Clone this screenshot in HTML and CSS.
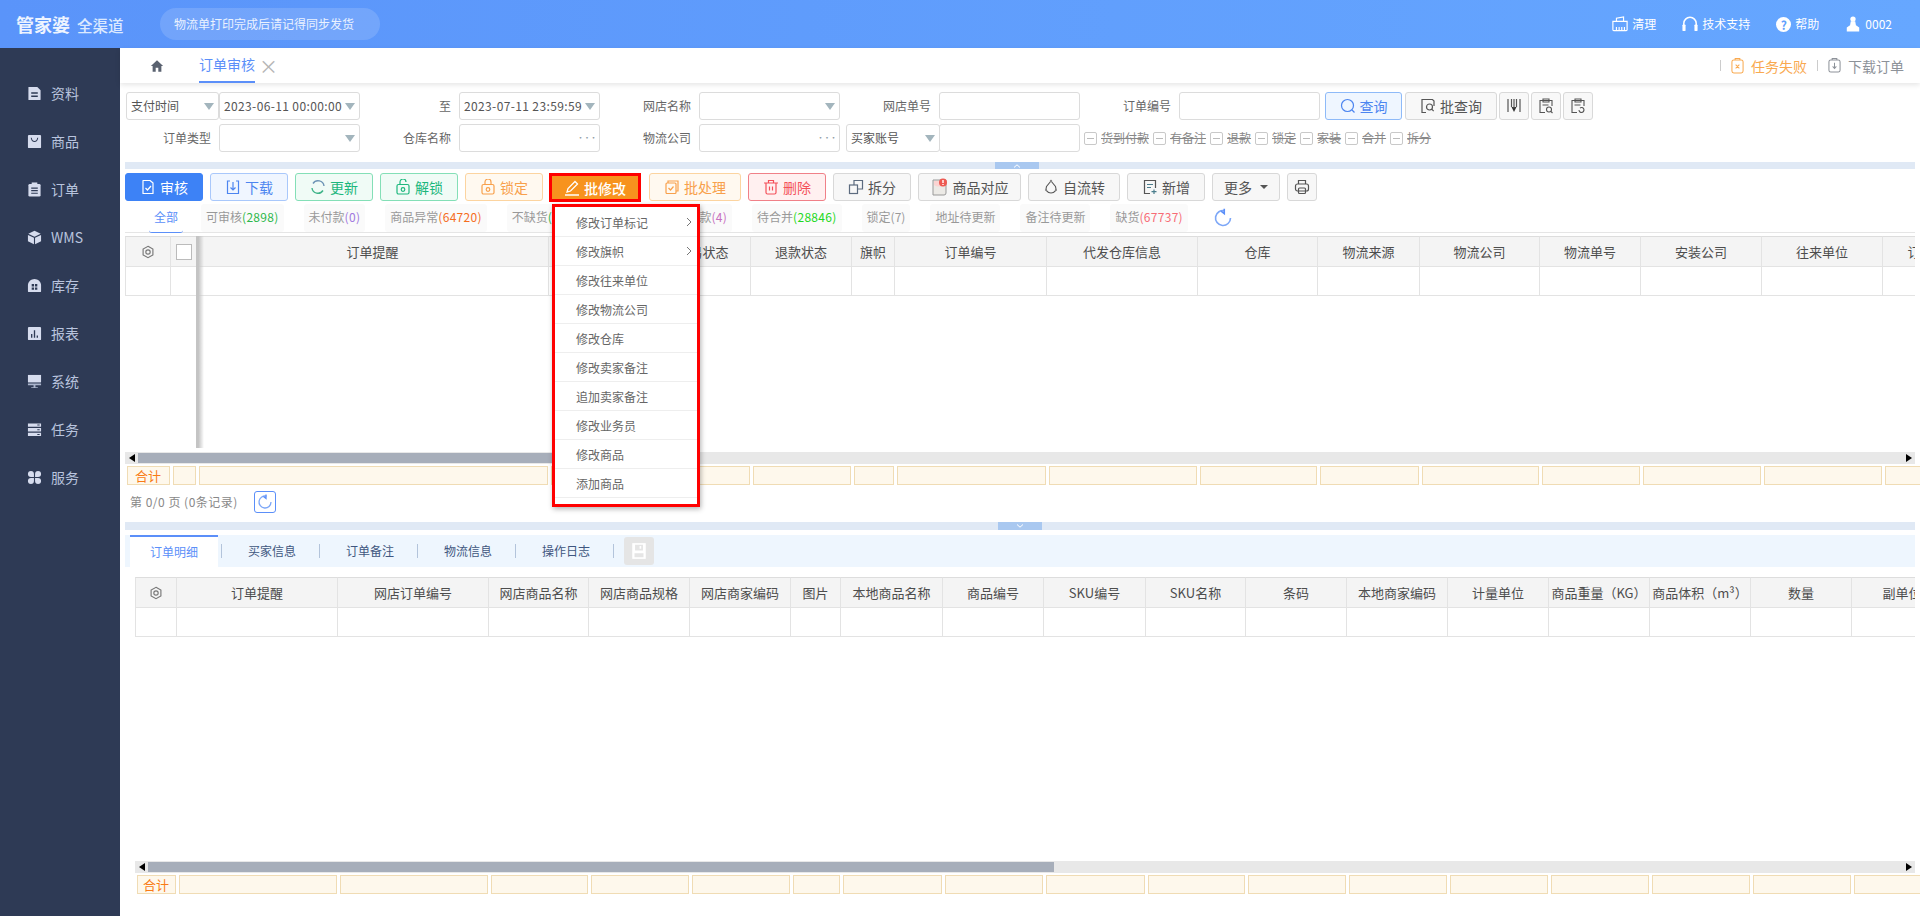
FILE: index.html
```html
<!DOCTYPE html>
<html lang="zh-CN">
<head>
    <meta charset="UTF-8">
    <meta name="viewport" content="width=device-width, initial-scale=1.0">
    <title>订单审核</title>
    <link rel="stylesheet" href="styles.css">
</head>
<body>
    <!-- icon sprite -->
    <svg class="sprite" xmlns="http://www.w3.org/2000/svg">
        <symbol id="i-doc" viewBox="0 0 16 16"><path fill="currentColor" d="M1.500 1H11l3.500 3.500V14a1 1 0 0 1-1 1h-12z"/><path stroke="#2e3a55" stroke-width="1.600" d="M4.500 7.500h7M4.500 11h7"/></symbol>
        <symbol id="i-bag" viewBox="0 0 16 16"><rect fill="currentColor" x="1" y="1" width="14" height="14" rx="1"/><path fill="none" stroke="#2e3a55" stroke-width="1.100" d="M4.500 4c.5 3 2 4 3.500 4s3-1 3.500-4"/></symbol>
        <symbol id="i-clip" viewBox="0 0 16 16"><rect fill="currentColor" x="1.500" y="2" width="13" height="13.500" rx="1.500"/><rect fill="currentColor" x="5" y="0.500" width="6" height="3"/><path stroke="#2e3a55" stroke-width="1.200" d="M4.500 6.500h7M4.500 9.200h7M4.500 12h7"/></symbol>
        <symbol id="i-cube" viewBox="0 0 16 16"><path fill="currentColor" d="M8 .8l6.600 3.200L8 7.200 1.400 4zM1 5.200l6.400 3.100v7L1 12zM15 5.200l-6.400 3.100v7L15 12z"/></symbol>
        <symbol id="i-house" viewBox="0 0 16 16"><path fill="currentColor" d="M8 1c3.600 0 7 3 7 6.500V14a1 1 0 0 1-1 1H2a1 1 0 0 1-1-1V7.500C1 4 4.400 1 8 1z"/><path fill="#2e3a55" d="M5 6.500h2.500V9H5zM8.500 6.500H11V9H8.500zM5 10h2.500v2.500H5zM8.500 10H11v2.500H8.500z"/></symbol>
        <symbol id="i-chart" viewBox="0 0 16 16"><rect fill="currentColor" x="1" y="1" width="14" height="14" rx="1"/><path stroke="#2e3a55" stroke-width="1.400" d="M5 12.500V8.500M8 12.500V4.500M11 12.500V10"/></symbol>
        <symbol id="i-screen" viewBox="0 0 16 16"><path fill="currentColor" d="M1 1h14v8H1z"/><path fill="#aab4cc" d="M1 10h14v2H1zM7 12h2v2h2.500v1h-7v-1H7z"/></symbol>
        <symbol id="i-server" viewBox="0 0 16 16"><path fill="currentColor" d="M1 1.500h14V5H1zM1 6.500h14V10H1zM1 11.500h14V15H1z"/><path fill="#2e3a55" d="M11 2.700h2.500v1.100H11zM11 7.700h2.500v1.100H11zM11 12.700h2.500v1.100H11z"/></symbol>
        <symbol id="i-clover" viewBox="0 0 16 16"><path fill="currentColor" d="M1 4.200a3.200 3.200 0 0 1 6.400 0v3.200H4.200A3.200 3.200 0 0 1 1 4.200zM15 4.200a3.200 3.200 0 0 0-6.400 0v3.200h3.200A3.200 3.200 0 0 0 15 4.200zM1 11.800a3.200 3.200 0 0 1 3.200-3.200h3.200v3.200a3.200 3.200 0 0 1-6.400 0zM15 11.800a3.200 3.200 0 0 0-3.200-3.200H8.600v3.200a3.200 3.200 0 0 0 6.400 0z"/></symbol>

        <symbol id="i-basket" viewBox="0 0 18 18"><g fill="none" stroke="currentColor" stroke-width="1.300"><path d="M1 6h16v9.500a1 1 0 0 1-1 1H2a1 1 0 0 1-1-1z"/><path d="M5 6V2.500l8-1.500v5M5 12.500v4M8 12.500v4M11 12.500v4M14 12.500v4"/></g></symbol>
        <symbol id="i-headset" viewBox="0 0 18 18"><path fill="none" stroke="currentColor" stroke-width="1.700" d="M2 11V8.500a7 7 0 0 1 14 0V11"/><rect fill="currentColor" x="0.500" y="9.500" width="3.500" height="7.500" rx="1"/><rect fill="currentColor" x="14" y="9.500" width="3.500" height="7.500" rx="1"/></symbol>
        <symbol id="i-user" viewBox="0 0 18 18"><circle fill="currentColor" cx="9" cy="3.500" r="3"/><path fill="currentColor" d="M6.500 6h5l.8 4.500 3.700 2.500v4.500H2V13l3.700-2.500z"/></symbol>
        <symbol id="i-home" viewBox="0 0 16 16"><path fill="currentColor" d="M8 1.500L15 8h-2v6.500H9.500V10h-3v4.500H3V8H1z"/></symbol>
        <symbol id="i-taskx" viewBox="0 0 14 18"><g fill="none" stroke="currentColor" stroke-width="1.100"><rect x="1" y="3" width="12" height="14" rx="2"/><path d="M4.500 3V1.500h5V3M5 8l4 4M9 8l-4 4"/></g></symbol>
        <symbol id="i-taskdown" viewBox="0 0 14 18"><g fill="none" stroke="currentColor" stroke-width="1.100"><rect x="1" y="3" width="12" height="13" rx="2"/><path d="M4.500 3V1.500h5V3M7 6v6M5 10l2 2.200L9 10"/></g></symbol>

        <symbol id="i-check" viewBox="0 0 16 16"><g fill="none" stroke="currentColor" stroke-width="1.200"><path d="M3 1.500h7L13 4v10.500H3z" stroke-linejoin="round"/><path d="M5.500 9l2 2 3.500-4"/></g></symbol>
        <symbol id="i-down" viewBox="0 0 16 16"><g fill="none" stroke="currentColor" stroke-width="1.200"><path d="M5 2H2.500v12.500h11V2H11"/><path d="M8 3v8M5.500 8.500L8 11l2.500-2.500"/></g></symbol>
        <symbol id="i-sync" viewBox="0 0 16 16"><g fill="none" stroke-width="1.400"><path stroke="#3fb489" d="M2 9a6 6 0 0 0 11 2.500"/><path stroke="#6c93b5" d="M14 7A6 6 0 0 0 3 4.500"/></g></symbol>
        <symbol id="i-unlock" viewBox="0 0 16 16"><g fill="none" stroke="currentColor" stroke-width="1.200"><rect x="2" y="5.500" width="12" height="9.500" rx="1.500"/><path d="M5 5.500V3a3 3 0 0 1 6 0"/><circle cx="8" cy="10.500" r="1.800"/></g></symbol>
        <symbol id="i-lock" viewBox="0 0 16 16"><g fill="none" stroke="currentColor" stroke-width="1.200"><rect x="2" y="5.500" width="12" height="9.500" rx="1.500"/><path d="M5 5.500V3a3 3 0 0 1 6 0v2.500"/><circle cx="8" cy="10.500" r="1.800"/></g></symbol>
        <symbol id="i-pen" viewBox="0 0 16 16"><path fill="none" stroke="currentColor" stroke-width="1.300" d="M11 1.500l2.500 2.500-7 7-3.500 1 1-3.500z"/><path stroke="currentColor" stroke-width="1.500" d="M1 15h14"/></symbol>
        <symbol id="i-batch" viewBox="0 0 16 16"><g fill="none" stroke="currentColor" stroke-width="1.200"><path d="M4 4V2h10v10h-2"/><rect x="2" y="4" width="10" height="10.500" rx="1"/><path d="M4.500 9l2 2 3-3.500"/></g></symbol>
        <symbol id="i-trash" viewBox="0 0 16 16"><g fill="none" stroke="currentColor" stroke-width="1.200"><path d="M1 4h14M3 4v9.500A1.500 1.500 0 0 0 4.500 15h7a1.500 1.500 0 0 0 1.500-1.500V4M5.500 4V1.500h5V4M6.500 7.500v4M9.500 7.500v4"/></g></symbol>
        <symbol id="i-copy" viewBox="0 0 16 16"><g fill="none" stroke="#5c6b7f" stroke-width="1.200"><rect x="1.500" y="6" width="8" height="8.500"/><path d="M6 6V1.500h8.500V10H9.500"/></g></symbol>
        <symbol id="i-match" viewBox="0 0 18 18"><path fill="#eceae6" stroke="#999" d="M2 2h13v13a2 2 0 0 1-2 2H2z"/><path fill="#fbd4d2" d="M3 3h11v4c-3 2-8 2-11 0z"/><circle cx="12" cy="4.500" r="4" fill="#ee5a52"/><path stroke="#fff" stroke-width="1.400" d="M12 2v3M12 6v1"/></symbol>
        <symbol id="i-flow" viewBox="0 0 16 16"><g fill="none" stroke="#555" stroke-width="1.100"><path d="M8 2L3.500 7.500C2 11 4.500 14 8 14s6-3 4.500-6.500z"/></g><circle cx="8" cy="2" r="1.200" fill="#888"/><circle cx="3" cy="11" r="1.100" fill="#888"/><circle cx="13" cy="11" r="1.100" fill="#888"/></symbol>
        <symbol id="i-add" viewBox="0 0 16 16"><g fill="none" stroke="#555" stroke-width="1.200"><path d="M8 14.500H2.500v-13h11V9"/><path d="M5 5.500h6M5 8.500h4M12 10.500V15M9.500 12.700h5" stroke="#4a7d8c"/></g></symbol>
        <symbol id="i-print" viewBox="0 0 16 16"><g fill="none" stroke="#555" stroke-width="1.200"><path d="M4.500 5V1.500h7V5"/><rect x="1.500" y="5" width="13" height="7" rx="2"/><rect x="4.500" y="9" width="7" height="5.500" rx="1"/></g></symbol>
        <symbol id="i-search" viewBox="0 0 16 16"><g fill="none" stroke="currentColor" stroke-width="1.200"><circle cx="7.500" cy="7.500" r="6"/><path d="M12 12l2.500 2.500"/></g></symbol>
        <symbol id="i-batchq" viewBox="0 0 16 16"><g fill="none" stroke="#555" stroke-width="1.200"><path d="M6 14.500H2v-13h10.500L14 3v5"/><circle cx="9.500" cy="9" r="3"/><path d="M11.700 11.200l2 2"/></g></symbol>
        <symbol id="i-cols" viewBox="0 0 16 16"><path stroke="#555" stroke-width="1.200" d="M2 1v13M14 1v13M5.500 1v8M10.500 1v8"/><path fill="#333" d="M5.500 9h5L8 14z"/><path stroke="#555" stroke-width="1.200" d="M8 1v9"/></symbol>
        <symbol id="i-docq" viewBox="0 0 16 16"><g fill="none" stroke="#555" stroke-width="1.100"><path d="M7 14.500H2v-12h12V8M5 1h6v3H5zM4.500 7h6"/><circle cx="11" cy="11.500" r="2.500"/><path d="M13 13.500l1.500 1.500"/></g></symbol>
        <symbol id="i-docr" viewBox="0 0 16 16"><g fill="none" stroke="#555" stroke-width="1.100"><path d="M7 14.500H2v-12h12V8M5 1h6v3H5zM4.500 7h6"/><path d="M9 12a2.500 2.500 0 1 0 1-2M14 11.500a3 3 0 0 1-2.500 3"/></g></symbol>
        <symbol id="i-gear" viewBox="0 0 16 16"><g fill="none" stroke="#777" stroke-width="1.300"><path d="M8 1.500l5.600 3.200v6.600L8 14.500l-5.600-3.200V4.700z"/><circle cx="8" cy="8" r="2.500"/></g></symbol>
        <symbol id="i-reload" viewBox="0 0 16 16"><g fill="none" stroke="#7da7f7" stroke-width="1.300"><path d="M9.500 2.200A6 6 0 1 0 14 8"/><path stroke="#5b8ff9" d="M9 .5v4l-2.500-2"/></g></symbol>
        <symbol id="i-save" viewBox="0 0 16 16"><path fill="#fff" d="M2 1h12v14H2z"/><path fill="#e5e5e5" d="M4.500 2.500h7v5h-7zM4 10h8v3.500H4z"/><path fill="#fff" d="M8.500 3.500H10V6H8.500z"/></symbol>
    </svg>

    <header class="topbar">
        <div class="logo"><span class="logo-main">管家婆</span><span class="logo-sub">全渠道</span></div>
        <div class="notice">物流单打印完成后请记得同步发货</div>
        <nav class="top-links">
            <a class="top-link"><svg class="ic16"><use href="#i-basket"/></svg>清理</a>
            <a class="top-link"><svg class="ic16"><use href="#i-headset"/></svg>技术支持</a>
            <a class="top-link"><span class="help-dot">?</span>帮助</a>
            <a class="top-link"><svg class="ic16"><use href="#i-user"/></svg>0002</a>
        </nav>
    </header>

    <div class="layout">
        <aside class="side">
            <a class="side-item"><svg class="ic15"><use href="#i-doc"/></svg>资料</a>
            <a class="side-item"><svg class="ic15"><use href="#i-bag"/></svg>商品</a>
            <a class="side-item"><svg class="ic15"><use href="#i-clip"/></svg>订单</a>
            <a class="side-item"><svg class="ic15"><use href="#i-cube"/></svg>WMS</a>
            <a class="side-item"><svg class="ic15"><use href="#i-house"/></svg>库存</a>
            <a class="side-item"><svg class="ic15"><use href="#i-chart"/></svg>报表</a>
            <a class="side-item"><svg class="ic15"><use href="#i-screen"/></svg>系统</a>
            <a class="side-item"><svg class="ic15"><use href="#i-server"/></svg>任务</a>
            <a class="side-item"><svg class="ic15"><use href="#i-clover"/></svg>服务</a>
        </aside>

        <main class="main">
            <div class="pagetabs">
                <svg class="home-ic"><use href="#i-home"/></svg>
                <span class="pagetab">订单审核</span>
                <span class="pagetab-x">×</span>
                <div class="pagetabs-right">
                    <i class="vsep"></i>
                    <span class="task-fail"><svg class="ic-task"><use href="#i-taskx"/></svg>任务失败</span>
                    <i class="vsep"></i>
                    <span class="task-down"><svg class="ic-task"><use href="#i-taskdown"/></svg>下载订单</span>
                </div>
            </div>

            <div class="content">
                <form class="filter">
                    <div class="frow">
                        <div class="ctl ctl-first">支付时间<i class="arrow"></i></div>
                        <div class="ctl ctl-date">2023-06-11 00:00:00<i class="arrow"></i></div>
                        <label class="lbl">至</label>
                        <div class="ctl ctl-date">2023-07-11 23:59:59<i class="arrow"></i></div>
                        <label class="lbl">网店名称</label>
                        <div class="ctl"><i class="arrow"></i></div>
                        <label class="lbl">网店单号</label>
                        <div class="ctl"></div>
                        <label class="lbl">订单编号</label>
                        <div class="ctl"></div>
                        <button type="button" class="qbtn qbtn-blue"><svg class="ic16"><use href="#i-search"/></svg>查询</button>
                        <button type="button" class="qbtn qbtn-batch"><svg class="ic16"><use href="#i-batchq"/></svg>批查询</button>
                        <button type="button" class="qbtn qbtn-icon"><svg class="ic16"><use href="#i-cols"/></svg></button>
                        <button type="button" class="qbtn qbtn-icon"><svg class="ic16"><use href="#i-docq"/></svg></button>
                        <button type="button" class="qbtn qbtn-icon"><svg class="ic16"><use href="#i-docr"/></svg></button>
                    </div>
                    <div class="frow">
                        <label class="lbl lbl-first">订单类型</label>
                        <div class="ctl"><i class="arrow"></i></div>
                        <label class="lbl">仓库名称</label>
                        <div class="ctl"><span class="dots">•••</span></div>
                        <label class="lbl">物流公司</label>
                        <div class="ctl"><span class="dots">•••</span></div>
                        <div class="ctl ctl-buyer">买家账号<i class="arrow"></i></div>
                        <div class="ctl ctl-joined"></div>
                        <div class="checks">
                            <span class="chk"><i class="box"></i>货到付款</span>
                            <span class="chk"><i class="box"></i>有备注</span>
                            <span class="chk"><i class="box"></i>退款</span>
                            <span class="chk"><i class="box"></i>锁定</span>
                            <span class="chk"><i class="box"></i>家装</span>
                            <span class="chk"><i class="box"></i>合并</span>
                            <span class="chk"><i class="box"></i>拆分</span>
                        </div>
                    </div>
                </form>

                <div class="split"><span class="split-handle"><svg viewBox="0 0 8 4" class="split-chev"><path d="M1 3.500L4 .8l3 2.700"/></svg></span></div>

                <div class="toolbar">
                    <button class="btn btn-primary"><svg class="ic16"><use href="#i-check"/></svg>审核</button>
                    <button class="btn btn-blue"><svg class="ic16"><use href="#i-down"/></svg>下载</button>
                    <button class="btn btn-green"><svg class="ic16"><use href="#i-sync"/></svg>更新</button>
                    <button class="btn btn-green"><svg class="ic16"><use href="#i-unlock"/></svg>解锁</button>
                    <button class="btn btn-orange"><svg class="ic16"><use href="#i-lock"/></svg>锁定</button>
                    <div class="batch">
                        <button class="btn btn-batch"><svg class="ic16"><use href="#i-pen"/></svg>批修改</button>
                        <ul class="menu">
                            <li class="menu-item">修改订单标记<svg class="menu-chev" viewBox="0 0 6 10"><path d="M1 1l4 4-4 4"/></svg></li>
                            <li class="menu-item">修改旗帜<svg class="menu-chev" viewBox="0 0 6 10"><path d="M1 1l4 4-4 4"/></svg></li>
                            <li class="menu-item">修改往来单位</li>
                            <li class="menu-item">修改物流公司</li>
                            <li class="menu-item">修改仓库</li>
                            <li class="menu-item">修改卖家备注</li>
                            <li class="menu-item">追加卖家备注</li>
                            <li class="menu-item">修改业务员</li>
                            <li class="menu-item">修改商品</li>
                            <li class="menu-item">添加商品</li>
                        </ul>
                    </div>
                    <button class="btn btn-orange btn-w92"><svg class="ic16"><use href="#i-batch"/></svg>批处理</button>
                    <button class="btn btn-red"><svg class="ic16"><use href="#i-trash"/></svg>删除</button>
                    <button class="btn"><svg class="ic16"><use href="#i-copy"/></svg>拆分</button>
                    <button class="btn btn-w103"><svg class="ic18"><use href="#i-match"/></svg>商品对应</button>
                    <button class="btn btn-w92"><svg class="ic16"><use href="#i-flow"/></svg>自流转</button>
                    <button class="btn"><svg class="ic16"><use href="#i-add"/></svg>新增</button>
                    <button class="btn btn-more">更多<i class="arrow-dark"></i></button>
                    <button class="btn btn-print"><svg class="ic16"><use href="#i-print"/></svg></button>
                </div>

                <div class="status">
                    <span class="chip chip-on">全部</span>
                    <span class="chip">可审核<em class="c-green">(2898)</em></span>
                    <span class="chip">未付款<em class="c-purple">(0)</em></span>
                    <span class="chip">商品异常<em class="c-orange">(64720)</em></span>
                    <span class="chip">不缺货<em class="c-green">(10245)</em></span>
                    <span class="chip">待发货</span>
                    <span class="chip">付款<em class="c-pink">(4)</em></span>
                    <span class="chip">待合并<em class="c-lime">(28846)</em></span>
                    <span class="chip">锁定(7)</span>
                    <span class="chip">地址待更新</span>
                    <span class="chip">备注待更新</span>
                    <span class="chip">缺货<em class="c-red">(67737)</em></span>
                    <svg class="status-reload"><use href="#i-reload"/></svg>
                </div>

                <div class="tbl tbl-top">
                    <div class="grid grid-a">
                        <div class="th"><svg class="gear"><use href="#i-gear"/></svg></div>
                        <div class="th"><i class="head-box"></i></div>
                        <div class="th">订单提醒</div>
                        <div class="th">网店名称</div>
                        <div class="th">交易状态</div>
                        <div class="th">退款状态</div>
                        <div class="th">旗帜</div>
                        <div class="th">订单编号</div>
                        <div class="th">代发仓库信息</div>
                        <div class="th">仓库</div>
                        <div class="th">物流来源</div>
                        <div class="th">物流公司</div>
                        <div class="th">物流单号</div>
                        <div class="th">安装公司</div>
                        <div class="th">往来单位</div>
                        <div class="th">订单类型</div>
                        <div class="td"></div><div class="td"></div><div class="td"></div><div class="td"></div>
                        <div class="td"></div><div class="td"></div><div class="td"></div><div class="td"></div>
                        <div class="td"></div><div class="td"></div><div class="td"></div><div class="td"></div>
                        <div class="td"></div><div class="td"></div><div class="td"></div><div class="td"></div>
                    </div>
                    <div class="frozen-shadow"></div>
                </div>
                <div class="hscroll">
                    <span class="hs-btn hs-left"></span><span class="hs-thumb hs-thumb-a"></span><span class="hs-btn hs-right"></span>
                </div>
                <div class="grid grid-a totals">
                    <div class="tf tf-label">合计</div><div class="tf"></div><div class="tf"></div><div class="tf"></div>
                    <div class="tf"></div><div class="tf"></div><div class="tf"></div><div class="tf"></div>
                    <div class="tf"></div><div class="tf"></div><div class="tf"></div><div class="tf"></div>
                    <div class="tf"></div><div class="tf"></div><div class="tf"></div><div class="tf"></div>
                </div>

                <div class="pager">
                    <span class="pager-txt">第 0/0 页 (0条记录)</span>
                    <button class="pager-btn"><svg class="ic16"><use href="#i-reload"/></svg></button>
                </div>

                <div class="split split-low"><span class="split-handle"><svg viewBox="0 0 8 4" class="split-chev"><path d="M1 .5l3 2.700 3-2.700"/></svg></span></div>

                <div class="subtabs">
                    <span class="subtab subtab-on">订单明细</span>
                    <span class="subtab">买家信息</span>
                    <span class="subtab">订单备注</span>
                    <span class="subtab">物流信息</span>
                    <span class="subtab">操作日志</span>
                    <span class="save-btn"><svg class="ic18"><use href="#i-save"/></svg></span>
                </div>

                <div class="lower">
                    <div class="tbl tbl-bottom">
                        <div class="grid grid-b">
                            <div class="th"><svg class="gear"><use href="#i-gear"/></svg></div>
                            <div class="th">订单提醒</div>
                            <div class="th">网店订单编号</div>
                            <div class="th">网店商品名称</div>
                            <div class="th">网店商品规格</div>
                            <div class="th">网店商家编码</div>
                            <div class="th">图片</div>
                            <div class="th">本地商品名称</div>
                            <div class="th">商品编号</div>
                            <div class="th">SKU编号</div>
                            <div class="th">SKU名称</div>
                            <div class="th">条码</div>
                            <div class="th">本地商家编码</div>
                            <div class="th">计量单位</div>
                            <div class="th">商品重量（KG）</div>
                            <div class="th">商品体积（m³）</div>
                            <div class="th">数量</div>
                            <div class="th">副单位</div>
                            <div class="td"></div><div class="td"></div><div class="td"></div><div class="td"></div><div class="td"></div><div class="td"></div>
                            <div class="td"></div><div class="td"></div><div class="td"></div><div class="td"></div><div class="td"></div><div class="td"></div>
                            <div class="td"></div><div class="td"></div><div class="td"></div><div class="td"></div><div class="td"></div><div class="td"></div>
                        </div>
                    </div>
                    <div class="hscroll">
                        <span class="hs-btn hs-left"></span><span class="hs-thumb hs-thumb-b"></span><span class="hs-btn hs-right"></span>
                    </div>
                    <div class="grid grid-b totals">
                        <div class="tf tf-label">合计</div><div class="tf"></div><div class="tf"></div><div class="tf"></div><div class="tf"></div><div class="tf"></div>
                        <div class="tf"></div><div class="tf"></div><div class="tf"></div><div class="tf"></div><div class="tf"></div><div class="tf"></div>
                        <div class="tf"></div><div class="tf"></div><div class="tf"></div><div class="tf"></div><div class="tf"></div><div class="tf"></div>
                    </div>
                </div>
            </div>
        </main>
    </div>
</body>
</html>
```

FILE: styles.css
```css
*{
    box-sizing: border-box;
}
html, body{
    margin: 0;
    height: 916px;
    overflow: hidden;
}
body{
    font-family: "Noto Sans CJK SC", "Noto Sans", sans-serif;
    font-size: 12px;
    line-height: 16px;
    color: #555;
    background-color: white;
}
em, i{
    font-style: normal;
}
.sprite{
    display: none;
}
.ic15{
    width: 15px;
    height: 15px;
    flex: none;
}
.ic16{
    width: 16px;
    height: 16px;
    flex: none;
}
.ic18{
    width: 18px;
    height: 18px;
    flex: none;
}

/* top bar */
.topbar{
    height: 48px;
    display: flex;
    align-items: center;
    padding-left: 16px;
    color: white;
    background: linear-gradient(to right, #5a94fa, #66a7ff);
}
.logo{
    width: 144px;
    display: flex;
    align-items: baseline;
    font-weight: 700;
}
.logo-main{
    font-size: 18px;
    margin-right: 7px;
    color: #eef4ff;
}
.logo-sub{
    font-size: 15.500px;
    font-weight: 500;
    color: #dce9ff;
}
.notice{
    width: 220px;
    height: 32px;
    line-height: 32px;
    padding-left: 14px;
    border-radius: 16px;
    background-color: rgba(255, 255, 255, 0.14);
    color: #eaf2ff;
}
.top-links{
    margin-left: auto;
    padding-right: 28px;
    display: flex;
    gap: 26px;
}
.top-link{
    display: flex;
    align-items: center;
    gap: 4px;
}
.help-dot{
    width: 15px;
    height: 15px;
    line-height: 15px;
    border-radius: 50%;
    background-color: white;
    color: #60a0fd;
    font-weight: 700;
    text-align: center;
}

/* layout */
.layout{
    display: flex;
    height: 868px;
}
.side{
    width: 120px;
    flex: none;
    padding-top: 21px;
    background-color: #2e3a55;
}
.side-item{
    height: 48px;
    display: flex;
    align-items: center;
    gap: 9px;
    padding-left: 27px;
    font-size: 14px;
    color: #b9c4de;
}
.side-item svg{
    color: #d6dcee;
}
.main{
    flex: 1;
    min-width: 0;
}

/* page tabs */
.pagetabs{
    height: 35px;
    display: flex;
    align-items: center;
    padding-left: 30px;
    background-color: white;
    box-shadow: 0 2px 5px rgba(0, 0, 0, 0.1);
    font-size: 14px;
}
.home-ic{
    width: 14px;
    height: 14px;
    color: #5a6270;
}
.pagetab{
    margin-left: 35px;
    height: 35px;
    line-height: 33px;
    color: #5b8ff9;
    border-bottom: 2px solid #5b8ff9;
}
.pagetab-x{
    margin-left: 4px;
    font-size: 19px;
    color: #b5b5b5;
}
.pagetabs-right{
    margin-left: auto;
    padding-right: 16px;
    display: flex;
    align-items: center;
    gap: 10px;
}
.vsep{
    width: 1px;
    height: 11px;
    background-color: #ccc;
}
.task-fail, .task-down{
    display: flex;
    align-items: center;
    gap: 7px;
}
.task-fail{
    color: #f9a94f;
}
.task-down{
    color: #8d9299;
}
.ic-task{
    width: 13px;
    height: 17px;
}

.content{
    padding: 9px 5px 0;
}

/* filter */
.filter{
    height: 70px;
}
.frow{
    display: flex;
    margin-bottom: 4px;
    padding-left: 1px;
}
.lbl{
    width: 91px;
    margin-right: 8px;
    line-height: 28px;
    text-align: right;
    flex: none;
    color: #666;
}
.lbl-first{
    width: 85px;
}
.ctl{
    position: relative;
    width: 141px;
    height: 28px;
    flex: none;
    padding-left: 4px;
    line-height: 26px;
    background-color: white;
    border: 1px solid #dcdcdc;
    border-radius: 3px;
    color: #555;
    white-space: nowrap;
}
.ctl-first{
    width: 93px;
}
.ctl-date{
    letter-spacing: 0.37px;
}
.ctl-buyer{
    width: 94px;
    margin-left: 6px;
}
.ctl-joined{
    margin-left: -1px;
}
.arrow{
    position: absolute;
    right: 4px;
    top: 10px;
    border-left: 5px solid transparent;
    border-right: 5px solid transparent;
    border-top: 7px solid #a3b5bd;
}
.dots{
    position: absolute;
    right: 3px;
    top: 0;
    font-size: 8px;
    letter-spacing: -1.500px;
    color: #8f9ba3;
}
.checks{
    display: flex;
    margin-left: 4px;
    gap: 4px;
    align-items: center;
}
.chk{
    display: flex;
    align-items: center;
    gap: 4px;
    color: #888;
    text-decoration: line-through;
}
.box{
    position: relative;
    width: 13px;
    height: 13px;
    border: 1px solid #c9c9c9;
    border-radius: 2px;
    background: linear-gradient(#bbb, #bbb) center / 7px 1px no-repeat;
}
.qbtn{
    height: 28px;
    margin-left: 3px;
    padding: 0;
    display: flex;
    align-items: center;
    justify-content: center;
    gap: 4px;
    font: inherit;
    font-size: 14px;
    color: #555;
    background-color: #f8f8f8;
    border: 1px solid #d9d9d9;
    border-radius: 3px;
}
.qbtn-blue{
    width: 77px;
    margin-left: 5px;
    color: #4c85f0;
    background-color: #eff6ff;
    border-color: #8ebaf8;
}
.qbtn-batch{
    width: 92px;
}
.qbtn-icon{
    width: 30px;
    margin-left: 2px;
}

/* split bars */
.split{
    height: 7px;
    display: flex;
    justify-content: center;
    padding-right: 6px;
    background-color: #e0e9f5;
}
.split-low{
    height: 8px;
    padding-right: 0;
}
.split-handle{
    width: 44px;
    height: 100%;
    display: flex;
    align-items: center;
    justify-content: center;
    background-color: #a9c8f0;
}
.split-chev{
    width: 8px;
    height: 4px;
    fill: none;
    stroke: white;
}

/* toolbar */
.toolbar{
    height: 35px;
    padding: 4px 0 3px;
    display: flex;
    align-items: flex-start;
    gap: 7px;
}
.btn{
    width: 78px;
    height: 28px;
    padding: 0;
    display: flex;
    align-items: center;
    justify-content: center;
    gap: 4px;
    flex: none;
    font: inherit;
    font-size: 14px;
    color: #555;
    background-color: #f7f7f7;
    border: 1px solid #d8d8d8;
    border-radius: 3px;
}
.btn-primary{
    color: white;
    background-color: #3d82f6;
    border-color: #3d82f6;
}
.btn-blue{
    color: #4c85f0;
    background-color: #f0f6ff;
    border-color: #a9c8fb;
}
.btn-green{
    color: #1db77d;
    background-color: #f0fbf6;
    border-color: #84dfb7;
}
.btn-orange{
    color: #f8a04b;
    background-color: #fff9f0;
    border-color: #fcd4a0;
}
.btn-red{
    color: #f4505a;
    background-color: #fff0f0;
    border-color: #f08088;
}
.btn-w92{
    width: 92px;
}
.btn-w103{
    width: 103px;
}
.btn-more{
    width: 68px;
    gap: 8px;
}
.btn-print{
    width: 30px;
}
.arrow-dark{
    border-left: 4px solid transparent;
    border-right: 4px solid transparent;
    border-top: 4px solid #555;
}
.batch{
    position: relative;
    flex: none;
    margin-left: -1px;
    margin-right: 1px;
}
.btn-batch{
    width: 92px;
    height: 29px;
    color: white;
    font-weight: 500;
    background-color: #f7931e;
    border: 3px solid red;
    border-radius: 0;
}

/* dropdown */
.menu{
    position: absolute;
    z-index: 5;
    left: 3px;
    top: 31px;
    width: 148px;
    height: 303px;
    margin: 0;
    padding: 1px 0 0;
    list-style: none;
    background-color: white;
    border: 3px solid red;
    box-shadow: 1px 2px 5px rgba(0, 0, 0, 0.3);
}
.menu-item{
    height: 29px;
    display: flex;
    align-items: center;
    justify-content: space-between;
    padding: 2px 5px 0 21px;
    color: #666;
    border-bottom: 1px solid #eee;
}
.menu-chev{
    width: 6px;
    height: 10px;
    margin-top: -2px;
    fill: none;
    stroke: #777;
}

/* status tabs */
.status{
    height: 29px;
    display: flex;
    align-items: flex-start;
    gap: 20px;
    padding-left: 24px;
    border-bottom: 1px solid #e5e5e5;
}
.chip{
    height: 28px;
    line-height: 26px;
    padding: 0 5px;
    color: #999;
    background-color: #fafafa;
    border-radius: 3px;
    white-space: nowrap;
}
.chip em{
    letter-spacing: 0.3px;
}
.chip-on{
    margin-right: -2px;
    color: #5b8ff9;
    background-color: white;
    border-bottom: 1px solid #5b8ff9;
    height: 29px;
}
.c-green{
    color: #2eb84a;
}
.c-purple{
    color: #a078e0;
}
.c-orange{
    color: #f56d1e;
}
.c-pink{
    color: #c86fc0;
}
.c-lime{
    color: #22d822;
}
.c-red{
    color: #f76c75;
}
.status-reload{
    width: 20px;
    height: 20px;
    margin: 4px 0 0 5px;
}

/* tables */
.tbl{
    position: relative;
    overflow: hidden;
}
.tbl-top{
    height: 216px;
    margin-top: 3px;
}
.tbl-bottom{
    height: 284px;
}
.grid{
    display: grid;
    width: max-content;
}
.grid-a{
    grid-template-columns: 46px 26px 352px 106px 96px 101px 43px 152px 151px 120px 102px 120px 101px 121px 121px 102px;
}
.grid-b{
    grid-template-columns: 42px 161px 151px 100px 101px 101px 50px 102px 101px 102px 100px 101px 101px 101px 101px 101px 101px 101px;
}
.th, .td{
    display: flex;
    align-items: center;
    justify-content: center;
    border-right: 1px solid #e3e3e3;
    border-bottom: 1px solid #e3e3e3;
    white-space: nowrap;
}
.th{
    height: 31px;
    font-size: 13px;
    color: #4d4d4d;
    background-color: #f4f4f4;
    border-top: 1px solid #ddd;
}
.th:first-child{
    border-left: 1px solid #e3e3e3;
}
.grid-a .td:nth-child(17), .grid-b .td:nth-child(19){
    border-left: 1px solid #e3e3e3;
}
.td{
    height: 29px;
}
.gear{
    width: 14px;
    height: 14px;
}
.head-box{
    width: 16px;
    height: 16px;
    background-color: white;
    border: 1px solid #bbb;
}
.frozen-shadow{
    position: absolute;
    left: 71px;
    top: 0;
    width: 8px;
    height: 212px;
    background: linear-gradient(to right, #c4c4c4 30%, rgba(255, 255, 255, 0));
}

/* scrollbars */
.hscroll{
    position: relative;
    height: 12px;
    background-color: #e8e8e8;
}
.hs-thumb{
    position: absolute;
    top: 1px;
    bottom: 1px;
    left: 13px;
    background-color: #a7aeba;
}
.hs-thumb-a{
    width: 462px;
}
.hs-thumb-b{
    width: 906px;
}
.hs-btn{
    position: absolute;
    top: 2px;
    border-top: 4px solid transparent;
    border-bottom: 4px solid transparent;
}
.hs-left{
    left: 4px;
    border-right: 6px solid black;
}
.hs-right{
    right: 3px;
    border-left: 6px solid black;
}

/* totals */
.totals{
    margin-top: 2px;
    height: 19px;
}
.tf{
    margin: 0 1.500px;
    height: 19px;
    background-color: #fef8ec;
    border: 1px solid #f0dcb4;
}
.tf-label{
    line-height: 17px;
    font-size: 13px;
    text-align: center;
    color: #f97b16;
}

/* pager */
.pager{
    height: 37px;
    display: flex;
    align-items: flex-start;
    padding: 6px 0 0 5px;
}
.pager-txt{
    width: 124px;
    line-height: 22px;
    letter-spacing: 0.5px;
    color: #888;
    white-space: nowrap;
}
.pager-btn{
    width: 22px;
    height: 22px;
    padding: 0;
    display: flex;
    align-items: center;
    justify-content: center;
    background-color: white;
    border: 1px solid #5b8ff9;
    border-radius: 3px;
}

/* detail tabs */
.subtabs{
    height: 32px;
    margin-top: 5px;
    padding-left: 5px;
    display: flex;
    background-color: #eef6fe;
}
.subtab{
    position: relative;
    width: 98px;
    line-height: 32px;
    padding-left: 26px;
    color: #3f5680;
}
.subtab::after{
    content: "";
    position: absolute;
    right: 0;
    top: 9px;
    height: 14px;
    width: 1px;
    background-color: #b3c4db;
}
.subtab-on{
    width: 88px;
    margin-right: 4px;
    padding-left: 20px;
    color: #5b8ff9;
    background-color: white;
    border-top: 2px solid #5b8ff9;
    line-height: 30px;
}
.subtab-on::after{
    right: -4px;
    top: 7px;
}
.save-btn{
    width: 30px;
    height: 28px;
    margin: 2px 0 0 10px;
    display: flex;
    align-items: center;
    justify-content: center;
    background-color: #e5e5e5;
    border-radius: 3px;
}
.lower{
    margin-top: 10px;
    padding-left: 10px;
}
```
